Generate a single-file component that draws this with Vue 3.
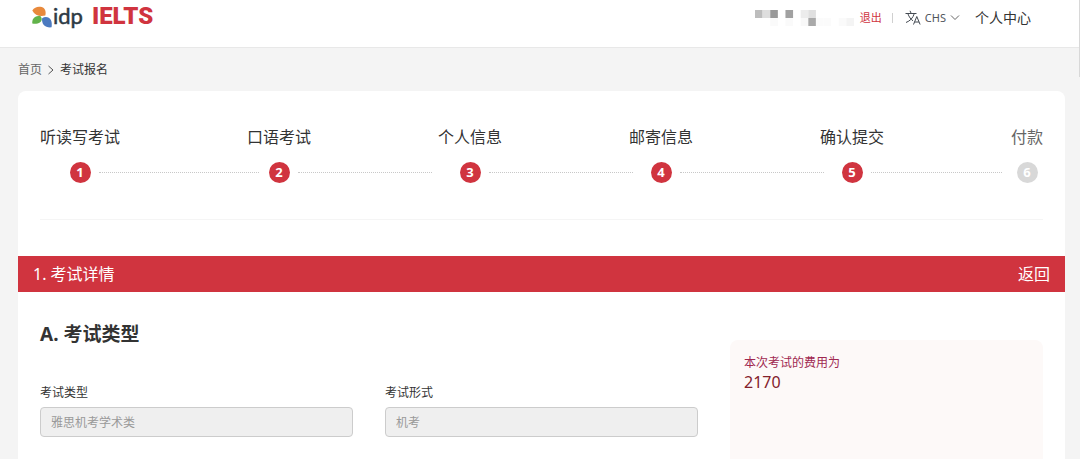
<script setup>
const steps = [
  { label: '听读写考试', lead: 0, tail: 0 },
  { label: '口语考试', lead: -21, tail: -12 },
  { label: '个人信息', lead: -13, tail: 6 },
  { label: '邮寄信息', lead: -13, tail: -4 },
  { label: '确认提交', lead: -13, tail: -4 },
  { label: '付款', lead: -13, tail: 9, pending: true },
]

const mosaic = [
  [0, 0, '#bdbdbd'], [1, 0, '#dedede'], [2, 0, '#999999'], [4, 0, '#a1a1a1'],
  [6, 0, '#ececec'], [7, 0, '#e0e0e0'], [2, 1, '#fafafa'], [4, 1, '#fafafa'],
  [6, 1, '#f8f8f8'], [7, 1, '#a9a9a9'], [8, 1, '#fbfbfb'], [9, 1, '#fbfbfb'],
  [11, 1, '#fafafa'], [12, 1, '#f4f4f4'],
]
</script>

<template>
  <div class="page">
    <header class="header">
      <a class="logo" href="#" aria-label="idp IELTS">
        <svg class="mark" viewBox="0 0 20 22" width="20" height="22" aria-hidden="true">
          <path d="M0.300 4.500C2.500 0.800 6.500 0 9.800 1.100c3.400 1.200 4.500 4.600 3.500 8.500C8 11 2.800 9.500 0.300 4.500z" fill="#e8893c" />
          <path d="M0.300 17.500C-0.200 12.500 3 10 8 9.800c4 3.500 1 8.900-7.700 7.700z" fill="#62b34a" />
          <path d="M10.100 12.200c3.200-2.200 7.200-1.400 8.800 1.800 1.100 2.100 1 4.800 0.700 7.300-6.300 0.700-10.200-2.900-9.500-9.100z" fill="#4b7ac0" />
        </svg>
        <span class="idp">idp</span>
        <span class="ielts">IELTS</span>
      </a>
      <nav class="nav">
        <svg class="mosaic" viewBox="0 0 104 16" width="99" height="16" preserveAspectRatio="none" aria-hidden="true">
          <rect v-for="(c, i) in mosaic" :key="i" :x="c[0] * 8" :y="c[1] * 8" width="8" height="8" :fill="c[2]" />
        </svg>
        <a class="logout" href="#">退出</a>
        <span class="sep"></span>
        <button class="lang" type="button">
          <svg viewBox="0 0 16 16" width="16" height="16" fill="none" stroke="#444a52" stroke-width="1" aria-hidden="true">
            <path d="M0.500 3.500h11M5 0.800l1.200 2.700M2.800 3.500C4 7 6 9.500 8 10.800M9.300 3.500C8 8 5 11 1 12.500" />
            <path d="M8.500 14.500l3.300-8 3.300 8M9.700 12h4.200" />
          </svg>
          <span>CHS</span>
          <svg viewBox="0 0 10 6" width="10" height="6" fill="none" stroke="#666" stroke-width="1" aria-hidden="true">
            <path d="M1 0.500l4 4 4-4" />
          </svg>
        </button>
        <a class="center" href="#">个人中心</a>
      </nav>
    </header>

    <nav class="crumbs" aria-label="breadcrumb">
      <a href="#">首页</a>
      <svg viewBox="0 0 6 10" width="6" height="10" fill="none" stroke="#555" stroke-width="1" aria-hidden="true">
        <path d="M0.500 1l4.500 4-4.500 4" />
      </svg>
      <span>考试报名</span>
    </nav>

    <main class="card">
      <div class="steps">
        <template v-for="(s, i) in steps" :key="s.label">
          <div v-if="i" class="link">
            <div class="line" :style="{ marginLeft: s.lead + 'px', marginRight: s.tail + 'px' }"></div>
          </div>
          <div class="step" :class="{ pending: s.pending }">
            <span class="name">{{ s.label }}</span>
            <span class="dot">{{ i + 1 }}</span>
          </div>
        </template>
      </div>

      <div class="bar">
        <span>1. 考试详情</span>
        <button type="button">返回</button>
      </div>

      <div class="body">
        <section class="form">
          <h2>A. 考试类型</h2>
          <div class="fields">
            <div class="field">
              <label for="type">考试类型</label>
              <input id="type" type="text" value="雅思机考学术类" disabled />
            </div>
            <div class="field">
              <label for="mode">考试形式</label>
              <input id="mode" type="text" value="机考" disabled />
            </div>
          </div>
        </section>
        <aside class="fee">
          <div class="fee-label">本次考试的费用为</div>
          <div class="fee-value">2170</div>
        </aside>
      </div>
    </main>
    <span class="thumb"></span>
  </div>
</template>

<style>
body {
  margin: 0;
  background: #f4f4f4;
}
</style>

<style scoped>
.page {
  position: relative;
  box-sizing: border-box;
  min-height: 100vh;
  display: flex;
  flex-direction: column;
  font-family: "Noto Sans", "Noto Sans CJK SC", sans-serif;
  color: #333;
}
a {
  color: inherit;
  text-decoration: none;
}
button {
  font: inherit;
  color: inherit;
  background: none;
  border: 0;
  padding: 0;
}
.header {
  display: flex;
  justify-content: space-between;
  align-items: center;
  height: 34px;
  padding: 0 49px 13px 32px;
  background: #fff;
  border-bottom: 1px solid #e8e8e8;
}
.logo {
  display: flex;
  align-items: center;
  padding-bottom: 2px;
}
.mark {
  margin: 2px 1px 0 0;
}
.idp {
  font-family: Lato, sans-serif;
  font-size: 22px;
  line-height: 30px;
  color: #2d3a45;
  -webkit-text-stroke: 0.5px #2d3a45;
}
.ielts {
  margin-left: 9px;
  font-family: Roboto, sans-serif;
  font-weight: 900;
  font-size: 24px;
  line-height: 30px;
  color: #d0343f;
}
.nav {
  display: flex;
  align-items: center;
  padding-top: 2px;
  line-height: 20px;
}
.mosaic {
  margin-right: 6px;
}
.logout {
  font-size: 11px;
  color: #d0343f;
}
.sep {
  width: 1px;
  height: 10px;
  margin: 0 12px 0 10px;
  background: #d0d0d0;
}
.lang {
  display: flex;
  align-items: center;
  gap: 4px;
  font-size: 11px;
  color: #50555c;
}
.center {
  margin-left: 15px;
  font-size: 14px;
}
.crumbs {
  display: flex;
  align-items: center;
  gap: 6px;
  padding: 11px 18px;
  font-size: 12px;
  line-height: 21px;
}
.crumbs a {
  color: #666;
}
.card {
  flex: 1;
  display: flex;
  flex-direction: column;
  margin: 0 15px 0 18px;
  background: #fff;
  border-radius: 8px 8px 0 0;
}
.steps {
  display: flex;
  align-items: flex-end;
  margin: 0 22px;
  padding: 34px 0 36px;
  border-bottom: 1px solid #f5f5f5;
}
.step {
  display: flex;
  flex-direction: column;
  align-items: center;
  gap: 13px;
  font-size: 16px;
  line-height: 24px;
  white-space: nowrap;
}
.dot {
  width: 21px;
  height: 21px;
  border-radius: 50%;
  background: #d0343f;
  color: #fff;
  font-size: 13px;
  font-weight: 700;
  line-height: 21px;
  text-align: center;
}
.pending {
  color: #666;
}
.pending .dot {
  background: #d8d8d8;
}
.link {
  flex: 1;
  padding-bottom: 10px;
}
.line {
  border-top: 1px dotted #c8c8c8;
}
.bar {
  display: flex;
  justify-content: space-between;
  align-items: center;
  margin-top: 36px;
  padding: 6px 15px;
  background: #d0343f;
  color: #fff;
  font-size: 16px;
  line-height: 24px;
}
.body {
  flex: 1;
  display: grid;
  grid-template-columns: repeat(3, 1fr);
  gap: 32px;
  padding: 0 22px;
}
.form {
  grid-column: span 2;
}
h2 {
  margin: 28px 0 35px;
  font-size: 19px;
  font-weight: 700;
  line-height: 28px;
}
.fields {
  display: grid;
  grid-template-columns: 1fr 1fr;
  gap: 32px;
}
.field {
  display: flex;
  flex-direction: column;
  gap: 4px;
  font-size: 12px;
  line-height: 20px;
}
input {
  box-sizing: border-box;
  width: 100%;
  height: 30px;
  padding: 0 10px;
  border: 1px solid #ccc;
  border-radius: 4px;
  background: #efefef;
  color: #999;
  font: inherit;
}
.fee {
  margin-top: 48px;
  padding: 14px;
  background: #fdf9f8;
  border-radius: 8px 8px 0 0;
}
.fee-label {
  font-size: 12px;
  line-height: 18px;
  color: #a02850;
}
.fee-value {
  font-size: 16px;
  line-height: 20px;
  color: #84212b;
}
.thumb {
  position: absolute;
  top: 0;
  right: 0;
  width: 1px;
  height: 77px;
  background: #d8d8d8;
}
</style>
